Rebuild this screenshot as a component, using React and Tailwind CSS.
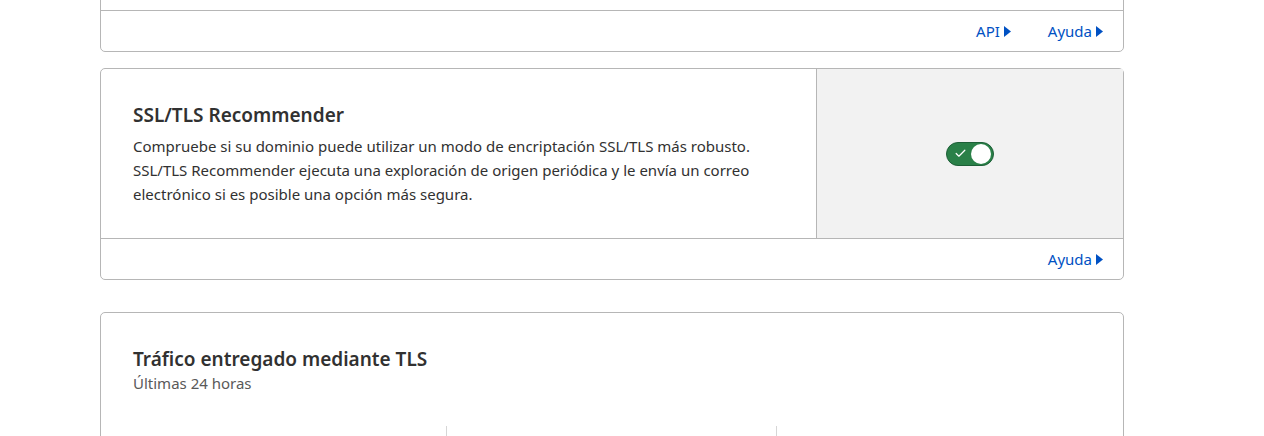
import { Check } from "lucide-react";

const Caret = () => (
  <svg width="7" height="11" viewBox="0 0 7 11" className="ml-1 inline-block" aria-hidden="true">
    <path d="M0 0 L7 5.5 L0 11 Z" fill="currentColor" />
  </svg>
);

const FooterLink = ({ children }) => (
  <a href="#" className="flex items-center text-[15px] text-[#0051c3] hover:underline">
    {children}
    <Caret />
  </a>
);

const CardFooter = ({ links }) => (
  <div className="flex h-[41px] items-center justify-end gap-[37px] border-t border-[#b6b6b6] pr-[20px]">
    {links.map((link) => (
      <FooterLink key={link}>{link}</FooterLink>
    ))}
  </div>
);

const Toggle = ({ on }) => (
  <button
    type="button"
    role="switch"
    aria-checked={on}
    className="relative flex h-6 w-12 items-center rounded-full border border-[#1d5f37] bg-[#2a8048] px-[3px]"
  >
    <Check size={13} strokeWidth={2.25} className="ml-[4px] text-white" />
    <span className="absolute right-[2px] top-[1px] h-5 w-5 rounded-full bg-white" />
  </button>
);

export default function App() {
  return (
    <div
      className="min-h-screen bg-white text-[#313131]"
      style={{ fontFamily: '"Noto Sans", "Open Sans", sans-serif' }}
    >
      <div className="ml-[100px] w-[1024px] -mt-[100px] pb-10">
        <div className="rounded-[5px] border border-[#b6b6b6]">
          <div className="h-[109px]" />
          <CardFooter links={["API", "Ayuda"]} />
        </div>

        <div className="mt-4 rounded-[5px] border border-[#b6b6b6]">
          <div className="flex">
            <div className="flex-1 px-8 py-8">
              <h2 className="text-[19px] font-semibold leading-7">SSL/TLS Recommender</h2>
              <p className="mt-[5px] text-[15px] leading-6">
                Compruebe si su dominio puede utilizar un modo de encriptación SSL/TLS más robusto.
                <br />
                SSL/TLS Recommender ejecuta una exploración de origen periódica y le envía un correo
                <br />
                electrónico si es posible una opción más segura.
              </p>
            </div>
            <div className="flex w-[307px] items-center justify-center border-l border-[#b6b6b6] bg-[#f2f2f2]">
              <Toggle on />
            </div>
          </div>
          <CardFooter links={["Ayuda"]} />
        </div>

        <div className="mt-8 rounded-[5px] border border-[#b6b6b6] px-8 pt-8">
          <h2 className="text-[19px] font-semibold leading-7">Tráfico entregado mediante TLS</h2>
          <p className="text-[15px] leading-5 text-[#595959]">Últimas 24 horas</p>
          <div className="mt-[33px] grid grid-cols-[313px_330px_1fr]">
            <div className="h-24" />
            <div className="h-24 border-l border-[#d6d6d6]" />
            <div className="h-24 border-l border-[#d6d6d6]" />
          </div>
        </div>
      </div>
    </div>
  );
}
